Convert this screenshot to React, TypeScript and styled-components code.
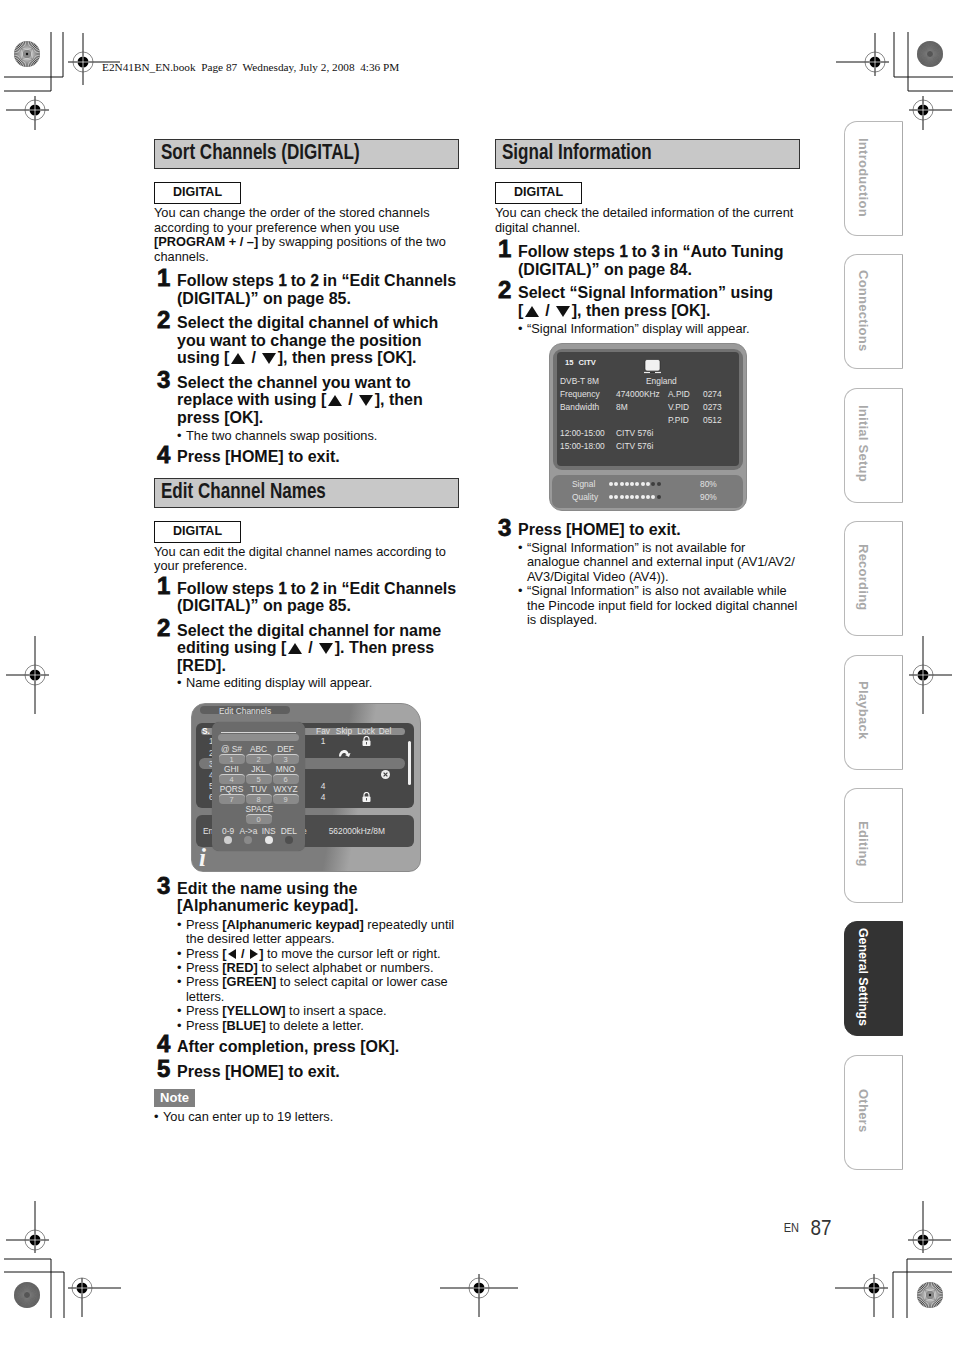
import * as React from "react";
import styled, { createGlobalStyle } from "styled-components";

const GlobalStyle = createGlobalStyle`
  html, body { margin: 0; padding: 0; background: #fff; }
  body { font-family: "Liberation Sans", Arial, sans-serif; color: #111; }
`;

const Sheet = styled.div`
  position: relative;
  width: 954px;
  height: 1351px;
  overflow: hidden;
  background: #fff;
  display: flex;
  flex-direction: column;
`;

const Slug = styled.div`
  margin-top: 61px;
  padding-left: 102px;
  height: 13px;
  font: 11.27px/13px "Liberation Serif", "Times New Roman", serif;
  color: #111;
  white-space: pre;
`;

const Body = styled.div`
  margin-top: 47px;
  padding-left: 154px;
  display: flex;
`;

const Columns = styled.div`
  padding-top: 18px;
  display: grid;
  grid-template-columns: 305px 305px;
  column-gap: 36px;
  align-content: start;
`;

const Column = styled.div`
  display: flex;
  flex-direction: column;
`;

const Heading = styled.h2<{ $top?: number }>`
  margin: ${(p) => p.$top ?? 0}px 0 0;
  box-sizing: border-box;
  height: 30px;
  padding-left: 6px;
  background: #c8c8c8;
  border: 1px solid #333;
  font: bold 22px/24px "Liberation Sans", sans-serif;
  color: #1a1a1a;
  white-space: nowrap;
  span {
    display: inline-block;
    transform: scaleX(0.775);
    transform-origin: left center;
  }
`;

const Badge = styled.div<{ $top?: number }>`
  margin-top: ${(p) => p.$top ?? 13}px;
  box-sizing: border-box;
  width: 87px;
  height: 22px;
  border: 1px solid #111;
  text-align: center;
  font: bold 12.5px/19px "Liberation Sans", sans-serif;
`;

const Para = styled.p`
  margin: 2px 0 0;
  font-size: 12.8px;
  line-height: 14.5px;
`;

const Step = styled.div<{ $top?: number }>`
  margin-top: ${(p) => p.$top ?? 7}px;
  display: grid;
  grid-template-columns: 23px 1fr;
  align-items: start;
  font-weight: bold;
  font-size: 16px;
  line-height: 17.5px;
  white-space: nowrap;
`;

const StepNum = styled.span`
  display: block;
  height: 17.5px;
  margin-top: -2.8px;
  padding-left: 3px;
  font: bold 24px/17.5px "Liberation Sans", sans-serif;
  -webkit-text-stroke: 0.8px #111;
`;

const Ref = styled.span`
  display: inline-block;
  width: 8px;
  text-align: center;
  font: bold 17px/14px "Liberation Sans", sans-serif;
  -webkit-text-stroke: 0.4px #111;
  transform: scaleX(0.88);
`;

const Bullets = styled.ul<{ $top?: number }>`
  list-style: none;
  margin: ${(p) => p.$top ?? 3}px 0 0;
  padding: 0 0 0 23px;
  font-size: 12.8px;
  line-height: 14.4px;
  white-space: nowrap;
`;

const Bullet = styled.li`
  position: relative;
  padding-left: 9px;
  &::before {
    content: "•";
    position: absolute;
    left: 0;
  }
`;

const Arrow = styled.svg<{ $w: number; $h: number; $gap: string }>`
  width: ${(p) => p.$w}px;
  height: ${(p) => p.$h}px;
  margin: ${(p) => p.$gap};
  vertical-align: -1px;
  fill: #111;
`;

const Up = () => <Arrow $w={14} $h={11} $gap="0 2px 0 1.5px" viewBox="0 0 14 11"><path d="M7 0 14 11H0Z" /></Arrow>;
const Down = () => <Arrow $w={14} $h={11} $gap="0 1.5px 0 2px" viewBox="0 0 14 11"><path d="M0 0H14L7 11Z" /></Arrow>;
const Left = () => <Arrow $w={8} $h={10} $gap="0 1.5px" viewBox="0 0 8 10"><path d="M8 0V10L0 5Z" /></Arrow>;
const Right = () => <Arrow $w={8} $h={10} $gap="0 1.5px" viewBox="0 0 8 10"><path d="M0 0 8 5 0 10Z" /></Arrow>;

const NoteTag = styled.div`
  margin-top: 9px;
  width: 41px;
  height: 18px;
  background: #808080;
  color: #fff;
  text-align: center;
  font: bold 13px/17px "Liberation Sans", sans-serif;
`;

const NoteLine = styled.div`
  position: relative;
  margin-top: 3px;
  padding-left: 9px;
  font-size: 12.8px;
  line-height: 14.5px;
  &::before {
    content: "•";
    position: absolute;
    left: 0;
  }
`;

/* Edit Channels screen */
const ChannelScreen = styled.div`
  margin: 12px 0 0 37px;
  box-sizing: border-box;
  width: 230px;
  height: 169px;
  padding: 2px 6px 0 4px;
  position: relative;
  border: 1px solid #8a8a8a;
  border-radius: 14px 20px 12px 12px;
  background: linear-gradient(100deg, #7d7d7d 0 62%, #a4a4a4 72%);
  font: 8.4px/10px "Liberation Sans", sans-serif;
  color: #e2e2e2;
  overflow: hidden;
`;

const ScreenTitle = styled.div`
  margin-left: 4px;
  width: 90px;
  height: 8px;
  padding-left: 19px;
  box-sizing: border-box;
  border-radius: 4px;
  background: #5f5f5f;
  line-height: 10px;
`;

const ChannelPanel = styled.div`
  margin-top: 9px;
  height: 85px;
  padding: 5px 9px 0 3px;
  box-sizing: border-box;
  border-radius: 6px;
  background: #474747;
  position: relative;
`;

const ChannelHead = styled.div`
  margin: 0 0 1px 2px;
  height: 7px;
  padding: 0 12px 0 1px;
  border-radius: 4px;
  background: #8c8c8c;
  display: grid;
  grid-template-columns: 1fr 20px 22px 22px 16px;
  text-align: center;
  line-height: 7px;
  b { text-align: left; color: #fff; }
`;

const ChannelRow = styled.div<{ $on?: boolean }>`
  height: 11.2px;
  padding: 0 12px 0 10px;
  border-radius: 6px;
  background: ${(p) => (p.$on ? "#777" : "transparent")};
  display: grid;
  grid-template-columns: 1fr 20px 22px 22px 16px;
  align-items: center;
  justify-items: center;
  span:first-child { justify-self: start; }
`;

const ScrollBar = styled.div`
  position: absolute;
  top: 18px;
  right: 3px;
  width: 3px;
  height: 44px;
  border-radius: 2px;
  background: #f2f2f2;
`;

const InfoPanel = styled.div`
  margin-top: 7px;
  height: 32px;
  padding: 0 29px 0 7px;
  box-sizing: border-box;
  border-radius: 6px;
  background: #4c4c4c;
  display: flex;
  align-items: center;
  span:nth-child(2) { margin-left: auto; margin-right: 22px; }
`;

const InfoMark = styled.div`
  margin: -1px 0 0 3px;
  font: italic bold 25px/24px "Liberation Serif", serif;
  color: #f4f4f4;
`;

const Keypad = styled.div`
  position: absolute;
  left: 20px;
  top: 18px;
  width: 93px;
  height: 129px;
  box-sizing: border-box;
  padding: 10px 6px 0;
  border-radius: 7px;
  background: #6b6b6b;
  box-shadow: 0 0 1px #555;
  text-align: center;
`;

const Field = styled.div`
  border-top: 1px solid #d8d8d8;
  margin: 0 3px;
  padding-top: 1px;
  div { height: 7px; margin: 0 -3px; border-radius: 4px; background: #8e8e8e; }
`;

const KeyGrid = styled.div`
  margin-top: 3px;
  display: grid;
  grid-template-columns: repeat(3, 26px);
  column-gap: 1px;
  justify-content: center;
`;

const KeyCell = styled.div<{ $col?: number }>`
  grid-column: ${(p) => p.$col ?? "auto"};
  line-height: 10px;
  white-space: nowrap;
`;

const KeyPill = styled.div`
  height: 9px;
  border-top: 1px solid #cfcfcf;
  border-radius: 4px;
  background: #8a8a8a;
  font-size: 7.5px;
  line-height: 9px;
  color: #d5d5d5;
`;

const ColorRow = styled.div`
  margin-top: 2px;
  display: grid;
  grid-template-columns: repeat(4, 1fr);
  line-height: 10px;
  white-space: nowrap;
`;

const Dot = styled.i<{ $tone: string }>`
  display: block;
  width: 8px;
  height: 8px;
  margin: 0 auto;
  border-radius: 50%;
  background: ${(p) => p.$tone};
`;

/* Signal Information screen */
const SignalScreen = styled.div`
  margin: 7px 0 0 54px;
  box-sizing: border-box;
  width: 198px;
  height: 168px;
  padding: 5px 3px 0;
  border: 1px solid #8a8a8a;
  border-radius: 13px;
  background: #9a9a9a;
  font: 8.4px/13px "Liberation Sans", sans-serif;
  color: #e2e2e2;
`;

const SignalFrame = styled.div`
  height: 121px;
  padding: 3px 4px 4px;
  box-sizing: border-box;
  border-radius: 9px;
  background: #717171;
`;

const SignalPanel = styled.div`
  height: 100%;
  padding: 3.5px 3px 0;
  box-sizing: border-box;
  border-radius: 4px;
  background: #454545;
  display: grid;
  grid-template-columns: 56px 52px 35px 1fr;
  grid-auto-rows: 13px;
`;

const ChannelName = styled.b`
  grid-column: 1 / 3;
  padding-left: 5px;
  font-size: 7.6px;
  color: #f2f2f2;
  word-spacing: 3px;
`;

const TvCell = styled.div`
  grid-column: 3 / 5;
  margin-left: -24px;
  padding-top: 3.5px;
  height: 19px;
`;

const Wide = styled.span`
  grid-column: 2 / 5;
  padding-left: 30px;
  margin-top: 6px;
`;

const Shifted = styled.span`
  margin-top: 6px;
`;

const SignalRows = styled.div`
  margin: 5px 0 0 -1px;
  height: 33px;
  padding: 2.5px 0 0 20px;
  box-sizing: border-box;
  border-radius: 7px;
  background: #7b7b7b;
  display: grid;
  grid-template-columns: 37px 91px 1fr;
  grid-auto-rows: 13px;
  align-items: center;
`;

const Beads = styled.div`
  display: flex;
  gap: 1.3px;
`;

const Bead = styled.i<{ $on: boolean }>`
  width: 4px;
  height: 4px;
  border-radius: 50%;
  background: ${(p) => (p.$on ? "#f0f0f0" : "#3e3e3e")};
`;

/* side tabs */
const Tabs = styled.nav`
  margin-left: 44px;
  display: flex;
  flex-direction: column;
  gap: 18.4px;
`;

const Tab = styled.div<{ $active?: boolean }>`
  box-sizing: border-box;
  width: 59px;
  height: 115px;
  padding-bottom: 3px;
  border: 1px solid ${(p) => (p.$active ? "#333" : "#b8b8b8")};
  border-right-color: ${(p) => (p.$active ? "#333" : "#aaa")};
  border-radius: 13px 0 0 13px;
  background: ${(p) => (p.$active ? "#333" : "#fff")};
  color: ${(p) => (p.$active ? "#fff" : "#a9a9a9")};
  display: flex;
  align-items: center;
  justify-content: center;
  span {
    writing-mode: vertical-rl;
    font: bold ${(p) => (p.$active ? 12.5 : 13)}px/14px "Liberation Sans", sans-serif;
    letter-spacing: ${(p) => (p.$active ? -0.1 : 0.25)}px;
    margin-right: 22px;
    white-space: nowrap;
  }
`;

const PageNo = styled.div`
  margin-top: 46px;
  padding-right: 123px;
  display: flex;
  justify-content: flex-end;
  align-items: center;
  gap: 10px;
  color: #333;
  small { font-size: 13px; display: inline-block; transform: scaleX(0.85); transform-origin: right; }
  strong { font-size: 22px; font-weight: normal; line-height: 24px; display: inline-block; transform: scaleX(0.86); transform-origin: right; margin-left: -3px; }
`;

/* print marks */
const MarksLayer = styled.svg`
  position: absolute;
  inset: 0;
  pointer-events: none;
`;

type MarkSpec = [number, number, number, number, number, number];

// centre x, centre y, arm left, arm right, arm top, arm bottom
const MARKS: MarkSpec[] = [
  [83, 62, 68, 120, 33, 85],
  [35, 110, 6, 49, 96, 130],
  [875, 62, 836, 889, 33, 76],
  [923, 110, 909, 952, 96, 130],
  [35, 675, 6, 49, 636, 714],
  [923, 675, 909, 952, 636, 714],
  [35, 1240, 6, 49, 1201, 1253],
  [923, 1240, 908, 951, 1201, 1253],
  [82, 1288, 68, 121, 1278, 1317],
  [479, 1288, 440, 518, 1274, 1317],
  [874, 1288, 835, 888, 1274, 1317],
];

const CROPS = [
  "M51 32V91M4 91H51M63 32V77M4 77H63",
  "M894 32V77H953M908 32V91H953",
  "M4 1259H51V1318M4 1272H64V1318",
  "M952 1259H907V1318M952 1272H893V1318",
];

const RegMark = ({ spec }: { spec: MarkSpec }) => {
  const [x, y, l, r, t, b] = spec;
  return (
    <g>
      <path d={`M${l} ${y}H${r}M${x} ${t}V${b}`} stroke="#111" strokeWidth="1" />
      <circle cx={x} cy={y} r="10" fill="none" stroke="#555" strokeWidth="0.7" />
      <circle cx={x} cy={y} r="5.5" fill="#000" />
      <path d={`M${x - 6} ${y}H${x + 6}M${x} ${y - 6}V${y + 6}`} stroke="#fff" strokeWidth="0.7" />
    </g>
  );
};

const Burst = ({ x, y, dense }: { x: number; y: number; dense?: boolean }) => {
  const count = dense ? 72 : 44;
  const from = dense ? 3 : 4;
  const spokes = Array.from({ length: count }, (_, i) => {
    const a = (i / count) * Math.PI * 2;
    return `M${(x + Math.cos(a) * from).toFixed(2)} ${(y + Math.sin(a) * from).toFixed(2)}L${(x + Math.cos(a) * 13).toFixed(2)} ${(y + Math.sin(a) * 13).toFixed(2)}`;
  }).join("");
  return (
    <g>
      <circle cx={x} cy={y} r="13" fill={dense ? "#555" : "#444"} />
      <path d={spokes} stroke={dense ? "#808080" : "#f4f4f4"} strokeWidth={dense ? 0.45 : 0.7} />
      {!dense && <circle cx={x} cy={y} r="4" fill="#8a8a8a" />}
      {!dense && <circle cx={x} cy={y} r="1.2" fill="#111" />}
    </g>
  );
};

const PrintMarks = () => (
  <MarksLayer width={954} height={1351} viewBox="0 0 954 1351">
    {CROPS.map((d) => (
      <path key={d} d={d} fill="none" stroke="#111" strokeWidth="1" />
    ))}
    {MARKS.map((m) => (
      <RegMark key={`${m[0]}-${m[1]}`} spec={m} />
    ))}
    <Burst x={27} y={54} />
    <Burst x={930} y={54} dense />
    <Burst x={27} y={1295} dense />
    <Burst x={930} y={1295} />
  </MarksLayer>
);

/* small screen icons */
const Lock = () => (
  <svg width="9" height="10" viewBox="0 0 9 10">
    <path d="M2 5V3a2.5 2.5 0 0 1 5 0v2" fill="none" stroke="#f4f4f4" strokeWidth="1.2" />
    <rect x="0.5" y="4.5" width="8" height="5.5" rx="1" fill="#f4f4f4" />
    <rect x="4" y="6" width="1" height="2.5" fill="#555" />
  </svg>
);

const Skip = () => (
  <svg width="13" height="8" viewBox="0 0 13 8">
    <path d="M1 7.5C1 3 4 1 6.5 1S10 3 10.5 4.5L12.5 4 11 8 7 6l1.5-.6C8 4.6 7 4 6 4 4.5 4 3.5 5.5 3 7.5Z" fill="#f4f4f4" />
  </svg>
);

const DelMark = () => (
  <svg width="9" height="9" viewBox="0 0 9 9">
    <circle cx="4.5" cy="4.5" r="4.5" fill="#eee" />
    <path d="M2.6 2.6 6.4 6.4M6.4 2.6 2.6 6.4" stroke="#444" strokeWidth="1.2" />
  </svg>
);

const Tv = () => (
  <svg width="17" height="15" viewBox="0 0 17 15">
    <rect x="1" y="0.5" width="15" height="11.5" rx="2" fill="#f1f1f1" stroke="#222" strokeWidth="0.6" />
    <path d="M0 13.5H17" stroke="#eee" strokeWidth="1.2" />
    <path d="M6 13.5H11" stroke="#333" strokeWidth="1.2" />
  </svg>
);

const KEYS = [
  ["@ S#", "1"],
  ["ABC", "2"],
  ["DEF", "3"],
  ["GHI", "4"],
  ["JKL", "5"],
  ["MNO", "6"],
  ["PQRS", "7"],
  ["TUV", "8"],
  ["WXYZ", "9"],
];

const COLOR_KEYS: [string, string][] = [
  ["0-9", "#cfcfcf"],
  ["A->a", "#8a8a8a"],
  ["INS", "#e8e8e8"],
  ["DEL", "#4f4f4f"],
];

const EditChannelsScreen = () => (
  <ChannelScreen>
    <ScreenTitle>Edit Channels</ScreenTitle>
    <ChannelPanel>
      <ChannelHead>
        <b>S.</b>
        <span>Fav</span>
        <span>Skip</span>
        <span>Lock</span>
        <span>Del</span>
      </ChannelHead>
      <ChannelRow>
        <span>1</span>
        <span>1</span>
        <span />
        <Lock />
        <span />
      </ChannelRow>
      <ChannelRow>
        <span>2</span>
        <span />
        <Skip />
        <span />
        <span />
      </ChannelRow>
      <ChannelRow $on>
        <span>3</span>
      </ChannelRow>
      <ChannelRow>
        <span>4</span>
        <span />
        <span />
        <span />
        <DelMark />
      </ChannelRow>
      <ChannelRow>
        <span>5</span>
        <span>4</span>
      </ChannelRow>
      <ChannelRow>
        <span>6</span>
        <span>4</span>
        <span />
        <Lock />
        <span />
      </ChannelRow>
      <ScrollBar />
    </ChannelPanel>
    <InfoPanel>
      <span>En</span>
      <span>e</span>
      <span>562000kHz/8M</span>
    </InfoPanel>
    <InfoMark>i</InfoMark>
    <Keypad>
      <Field>
        <div />
      </Field>
      <KeyGrid>
        {KEYS.map(([label, num]) => (
          <KeyCell key={num}>
            {label}
            <KeyPill>{num}</KeyPill>
          </KeyCell>
        ))}
        <KeyCell $col={2}>
          SPACE
          <KeyPill>0</KeyPill>
        </KeyCell>
      </KeyGrid>
      <ColorRow>
        {COLOR_KEYS.map(([label, tone]) => (
          <div key={label}>
            {label}
            <Dot $tone={tone} />
          </div>
        ))}
      </ColorRow>
    </Keypad>
  </ChannelScreen>
);

const Meter = ({ on }: { on: number }) => (
  <Beads>
    {Array.from({ length: 10 }, (_, i) => (
      <Bead key={i} $on={i < on} />
    ))}
  </Beads>
);

const SignalInfoScreen = () => (
  <SignalScreen>
    <SignalFrame>
      <SignalPanel>
        <ChannelName>15 CITV</ChannelName>
        <TvCell>
          <Tv />
        </TvCell>
        <Shifted>DVB-T 8M</Shifted>
        <Wide>England</Wide>
        <Shifted>Frequency</Shifted>
        <Shifted>474000KHz</Shifted>
        <Shifted>A.PID</Shifted>
        <Shifted>0274</Shifted>
        <Shifted>Bandwidth</Shifted>
        <Shifted>8M</Shifted>
        <Shifted>V.PID</Shifted>
        <Shifted>0273</Shifted>
        <Shifted />
        <Shifted />
        <Shifted>P.PID</Shifted>
        <Shifted>0512</Shifted>
        <Shifted>12:00-15:00</Shifted>
        <Shifted>CITV 576i</Shifted>
        <Shifted />
        <Shifted />
        <Shifted>15:00-18:00</Shifted>
        <Shifted>CITV 576i</Shifted>
      </SignalPanel>
    </SignalFrame>
    <SignalRows>
      <span>Signal</span>
      <Meter on={8} />
      <span>80%</span>
      <span>Quality</span>
      <Meter on={9} />
      <span>90%</span>
    </SignalRows>
  </SignalScreen>
);

const TAB_NAMES = [
  "Introduction",
  "Connections",
  "Initial Setup",
  "Recording",
  "Playback",
  "Editing",
  "General Settings",
  "Others",
];

export default function App() {
  return (
    <Sheet>
      <GlobalStyle />
      <Slug>{"E2N41BN_EN.book  Page 87  Wednesday, July 2, 2008  4:36 PM"}</Slug>
      <Body>
        <Columns>
          <Column>
            <Heading><span>Sort Channels (DIGITAL)</span></Heading>
            <Badge>DIGITAL</Badge>
            <Para>
              You can change the order of the stored channels
              <br />
              according to your preference when you use
              <br />
              <b>[PROGRAM + / –]</b> by swapping positions of the two
              <br />
              channels.
            </Para>
            <Step $top={8}>
              <StepNum>1</StepNum>
              <div>
                Follow steps <Ref>1</Ref> to <Ref>2</Ref> in “Edit Channels
                <br />
                (DIGITAL)” on page 85.
              </div>
            </Step>
            <Step>
              <StepNum>2</StepNum>
              <div>
                Select the digital channel of which
                <br />
                you want to change the position
                <br />
                using [<Up /> / <Down />], then press [OK].
              </div>
            </Step>
            <Step>
              <StepNum>3</StepNum>
              <div>
                Select the channel you want to
                <br />
                replace with using [<Up /> / <Down />], then
                <br />
                press [OK].
              </div>
            </Step>
            <Bullets>
              <Bullet>The two channels swap positions.</Bullet>
            </Bullets>
            <Step $top={5}>
              <StepNum>4</StepNum>
              <div>Press [HOME] to exit.</div>
            </Step>

            <Heading $top={12}><span>Edit Channel Names</span></Heading>
            <Badge>DIGITAL</Badge>
            <Para>
              You can edit the digital channel names according to
              <br />
              your preference.
            </Para>
            <Step $top={6}>
              <StepNum>1</StepNum>
              <div>
                Follow steps <Ref>1</Ref> to <Ref>2</Ref> in “Edit Channels
                <br />
                (DIGITAL)” on page 85.
              </div>
            </Step>
            <Step>
              <StepNum>2</StepNum>
              <div>
                Select the digital channel for name
                <br />
                editing using [<Up /> / <Down />]. Then press
                <br />
                [RED].
              </div>
            </Step>
            <Bullets $top={2}>
              <Bullet>Name editing display will appear.</Bullet>
            </Bullets>
            <EditChannelsScreen />
            <Step $top={8}>
              <StepNum>3</StepNum>
              <div>
                Edit the name using the
                <br />
                [Alphanumeric keypad].
              </div>
            </Step>
            <Bullets $top={3}>
              <Bullet>
                Press <b>[Alphanumeric keypad]</b> repeatedly until
                <br />
                the desired letter appears.
              </Bullet>
              <Bullet>
                Press <b>[<Left /> / <Right />]</b> to move the cursor left or right.
              </Bullet>
              <Bullet>
                Press <b>[RED]</b> to select alphabet or numbers.
              </Bullet>
              <Bullet>
                Press <b>[GREEN]</b> to select capital or lower case
                <br />
                letters.
              </Bullet>
              <Bullet>
                Press <b>[YELLOW]</b> to insert a space.
              </Bullet>
              <Bullet>
                Press <b>[BLUE]</b> to delete a letter.
              </Bullet>
            </Bullets>
            <Step $top={5}>
              <StepNum>4</StepNum>
              <div>After completion, press [OK].</div>
            </Step>
            <Step>
              <StepNum>5</StepNum>
              <div>Press [HOME] to exit.</div>
            </Step>
            <NoteTag>Note</NoteTag>
            <NoteLine>You can enter up to 19 letters.</NoteLine>
          </Column>

          <Column>
            <Heading><span>Signal Information</span></Heading>
            <Badge>DIGITAL</Badge>
            <Para>
              You can check the detailed information of the current
              <br />
              digital channel.
            </Para>
            <Step $top={8}>
              <StepNum>1</StepNum>
              <div>
                Follow steps <Ref>1</Ref> to <Ref>3</Ref> in “Auto Tuning
                <br />
                (DIGITAL)” on page 84.
              </div>
            </Step>
            <Step $top={6}>
              <StepNum>2</StepNum>
              <div>
                Select “Signal Information” using
                <br />
                [<Up /> / <Down />], then press [OK].
              </div>
            </Step>
            <Bullets>
              <Bullet>“Signal Information” display will appear.</Bullet>
            </Bullets>
            <SignalInfoScreen />
            <Step $top={10}>
              <StepNum>3</StepNum>
              <div>Press [HOME] to exit.</div>
            </Step>
            <Bullets $top={2}>
              <Bullet>
                “Signal Information” is not available for
                <br />
                analogue channel and external input (AV1/AV2/
                <br />
                AV3/Digital Video (AV4)).
              </Bullet>
              <Bullet>
                “Signal Information” is also not available while
                <br />
                the Pincode input field for locked digital channel
                <br />
                is displayed.
              </Bullet>
            </Bullets>
          </Column>
        </Columns>
        <Tabs>
          {TAB_NAMES.map((name) => (
            <Tab key={name} $active={name === "General Settings"}>
              <span>{name}</span>
            </Tab>
          ))}
        </Tabs>
      </Body>
      <PageNo>
        <small>EN</small>
        <strong>87</strong>
      </PageNo>
      <PrintMarks />
    </Sheet>
  );
}
